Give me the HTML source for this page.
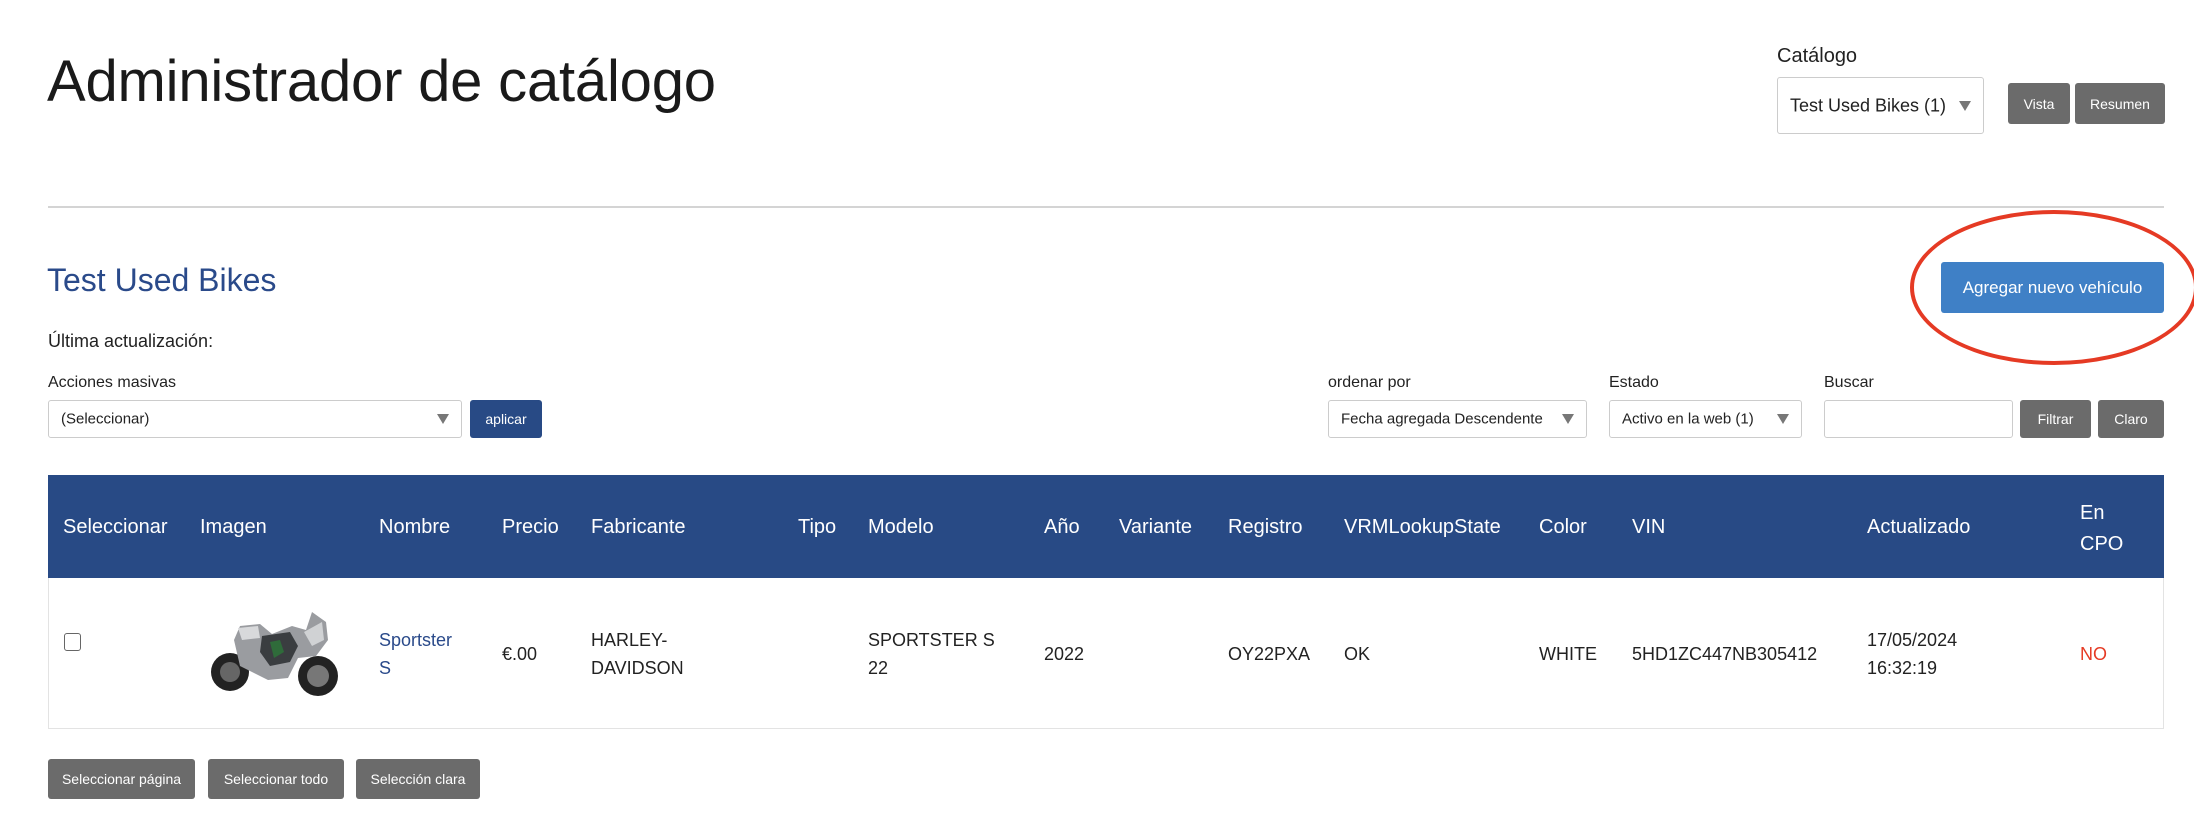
<!DOCTYPE html>
<html><head><meta charset="utf-8"><style>
*{margin:0;padding:0;box-sizing:border-box}
body{width:2194px;height:830px;background:#fff;position:relative;overflow:hidden;font-family:"Liberation Sans",Arial,sans-serif;color:#222}
.a{position:absolute;white-space:nowrap}
.sel{position:absolute;border:1px solid #ccc;border-radius:3px;background:#fff;font-size:16px;color:#222}
.sel span{position:absolute;left:12px;top:50%;transform:translateY(-50%)}
.sel i{position:absolute;right:12px;top:50%;margin-top:-5px;width:0;height:0;border-left:6px solid transparent;border-right:6px solid transparent;border-top:10px solid #777}
.btn{position:absolute;background:#6b6b6b;color:#fff;border-radius:3px;font-size:14px;display:flex;align-items:center;justify-content:center}
.th{position:absolute;color:#fff;font-size:20px;white-space:nowrap}
.td{position:absolute;font-size:18px;white-space:nowrap;line-height:28px}
</style></head><body>
<div class="a" style="left:47px;top:48px;font-size:58px;color:#1a1a1a;letter-spacing:-0.2px">Administrador de catálogo</div>
<div class="a" style="left:1777px;top:45px;font-size:20px">Catálogo</div>
<div class="sel" style="left:1777px;top:77px;width:207px;height:57px"><span style="font-size:18px">Test Used Bikes (1)</span><i></i></div>
<div class="btn" style="left:2008px;top:83px;width:62px;height:41px">Vista</div>
<div class="btn" style="left:2075px;top:83px;width:90px;height:41px">Resumen</div>
<div class="a" style="left:48px;top:206px;width:2116px;height:2px;background:#d4d4d4"></div>
<div class="a" style="left:47px;top:262px;font-size:32px;color:#2a4a8a">Test Used Bikes</div>
<div class="btn" style="left:1941px;top:262px;width:223px;height:51px;background:#3f80c6;font-size:17px">Agregar nuevo vehículo</div>
<div class="a" style="left:1910px;top:210px;width:288px;height:155px;border:4px solid #e53a24;border-radius:50%"></div>
<div class="a" style="left:48px;top:331px;font-size:18px">Última actualización:</div>
<div class="a" style="left:48px;top:374px;font-size:16px">Acciones masivas</div>
<div class="sel" style="left:48px;top:400px;width:414px;height:38px"><span style="font-size:15px">(Seleccionar)</span><i></i></div>
<div class="btn" style="left:470px;top:400px;width:72px;height:38px;background:#284a85">aplicar</div>
<div class="a" style="left:1328px;top:374px;font-size:16px">ordenar por</div>
<div class="sel" style="left:1328px;top:400px;width:259px;height:38px"><span style="font-size:15px">Fecha agregada Descendente</span><i></i></div>
<div class="a" style="left:1609px;top:374px;font-size:16px">Estado</div>
<div class="sel" style="left:1609px;top:400px;width:193px;height:38px"><span style="font-size:15px">Activo en la web (1)</span><i></i></div>
<div class="a" style="left:1824px;top:374px;font-size:16px">Buscar</div>
<div class="sel" style="left:1824px;top:400px;width:189px;height:38px"></div>
<div class="btn" style="left:2020px;top:400px;width:71px;height:38px">Filtrar</div>
<div class="btn" style="left:2098px;top:400px;width:66px;height:38px">Claro</div>

<div class="a" style="left:48px;top:475px;width:2116px;height:103px;background:#284a85"></div>
<div class="a" style="left:48px;top:578px;width:2116px;height:151px;border:1px solid #e3e3e3;border-top:none"></div>
<div class="th" style="left:63px;top:516px">Seleccionar</div>
<div class="th" style="left:200px;top:516px">Imagen</div>
<div class="th" style="left:379px;top:516px">Nombre</div>
<div class="th" style="left:502px;top:516px">Precio</div>
<div class="th" style="left:591px;top:516px">Fabricante</div>
<div class="th" style="left:798px;top:516px">Tipo</div>
<div class="th" style="left:868px;top:516px">Modelo</div>
<div class="th" style="left:1044px;top:516px">Año</div>
<div class="th" style="left:1119px;top:516px">Variante</div>
<div class="th" style="left:1228px;top:516px">Registro</div>
<div class="th" style="left:1344px;top:516px">VRMLookupState</div>
<div class="th" style="left:1539px;top:516px">Color</div>
<div class="th" style="left:1632px;top:516px">VIN</div>
<div class="th" style="left:1867px;top:516px">Actualizado</div>
<div class="th" style="left:2080px;top:498px;line-height:31px">En<br>CPO</div>

<div class="a" style="left:64px;top:633px;width:17px;height:18px;border:1.5px solid #666;border-radius:3px"></div>
<svg class="a" style="left:200px;top:600px" width="150" height="105" viewBox="0 0 150 105">
<circle cx="30" cy="72" r="19" fill="#222"/><circle cx="30" cy="72" r="10" fill="#666"/>
<circle cx="118" cy="76" r="20" fill="#222"/><circle cx="118" cy="76" r="11" fill="#777"/>
<path d="M40 26 L60 24 L72 34 L92 26 L106 30 L112 12 L126 22 L128 40 L116 56 L98 58 L88 78 L68 80 L40 66 L34 40 Z" fill="#9a9ca0"/>
<path d="M62 36 L90 32 L98 46 L90 62 L70 66 L60 52 Z" fill="#3a3d40"/>
<path d="M70 42 L80 40 L84 52 L74 58 Z" fill="#2f6b3a"/>
<path d="M38 28 L58 26 L60 38 L42 40 Z" fill="#d8d9db"/>
<path d="M104 32 L122 22 L124 40 L112 46 Z" fill="#d0d2d4"/>
</svg>
<div class="td" style="left:379px;top:626px;color:#2a4a8a">Sportster<br>S</div>
<div class="td" style="left:502px;top:640px">€.00</div>
<div class="td" style="left:591px;top:626px">HARLEY-<br>DAVIDSON</div>
<div class="td" style="left:868px;top:626px">SPORTSTER S<br>22</div>
<div class="td" style="left:1044px;top:640px">2022</div>
<div class="td" style="left:1228px;top:640px">OY22PXA</div>
<div class="td" style="left:1344px;top:640px">OK</div>
<div class="td" style="left:1539px;top:640px">WHITE</div>
<div class="td" style="left:1632px;top:640px">5HD1ZC447NB305412</div>
<div class="td" style="left:1867px;top:626px">17/05/2024<br>16:32:19</div>
<div class="td" style="left:2080px;top:640px;color:#e53a24">NO</div>

<div class="btn" style="left:48px;top:759px;width:147px;height:40px">Seleccionar página</div>
<div class="btn" style="left:208px;top:759px;width:136px;height:40px">Seleccionar todo</div>
<div class="btn" style="left:356px;top:759px;width:124px;height:40px">Selección clara</div>
</body></html>
